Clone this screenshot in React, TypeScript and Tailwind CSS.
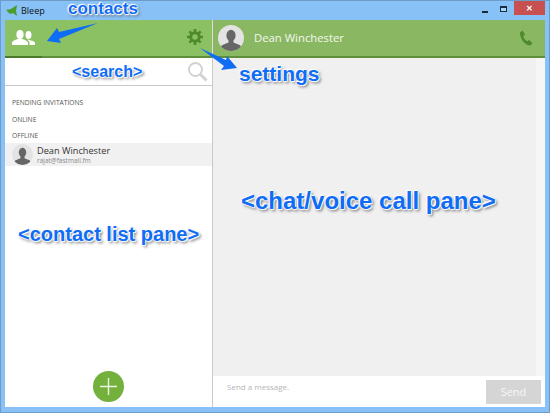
import React from "react";

const glow =
  "absolute whitespace-nowrap font-bold text-[#0f6cf5] font-['Liberation_Sans',sans-serif] leading-none [text-shadow:0_0_1px_#fff,0_0_2px_#fff,0_0_2px_#fff,1px_1px_1px_#fff,-1px_-1px_1px_#fff,2px_2px_3px_#666]";

function Avatar({ size }: { size: number }) {
  return (
    <svg width={size} height={size} viewBox="0 0 26 26" className="shrink-0">
      <defs>
        <clipPath id={`c${size}`}>
          <circle cx="13" cy="13" r="13" />
        </clipPath>
      </defs>
      <circle cx="13" cy="13" r="13" fill="#e3e3e3" />
      <g clipPath={`url(#c${size})`} fill="#666">
        <ellipse cx="13" cy="10.5" rx="4.6" ry="5.8" />
        <path d="M10.5 14.5h5v3l6 2.5c1.5.7 2 2 2 6H2.500c0-4 .5-5.300 2-6l6-2.500z" />
      </g>
    </svg>
  );
}

export default function App() {
  return (
    <div className="relative w-[550px] h-[413px] overflow-hidden bg-[#87c1f6] font-['Open_Sans','Noto_Sans',sans-serif] flex flex-col border border-[#6d9ccb]">
      {/* Title bar */}
      <div className="h-[19px] shrink-0 flex items-center pl-[5px] relative">
        <svg width="12" height="12" viewBox="0 0 12 12" className="mr-[3px]">
          <path d="M0 5l5-1 6-4-1 6 1 5-4-3-3 1z" fill="#4c9a2a" />
        </svg>
        <span className="text-[9px] text-[#111]">Bleep</span>
        <div className="ml-auto flex items-center h-full self-start">
          <div className="w-[6px] h-[2px] bg-[#1c2b3a] mt-[3px] mr-[12px] self-center" />
          <div className="w-[7px] h-[6px] border border-[#1c2b3a] border-t-2 bg-[#a9d6f8] mr-[7px] mb-[3px] self-center" />
          <div className="w-[31px] h-[14px] bg-[#c75050] text-white text-[8px] font-bold flex items-center justify-center self-start leading-none mr-[4px]">
            ✕
          </div>
        </div>
      </div>

      {/* Window content */}
      <div className="flex-1 mx-[4px] mb-[5px] flex bg-white min-h-0">
        {/* Left pane */}
        <div className="w-[208px] shrink-0 flex flex-col">
          <div className="h-[38px] shrink-0 bg-[#8cc163] border-b-2 border-b-[#5f8f3a] border-r border-r-[#ecd7e4] relative flex items-center justify-between pl-[7px] pr-[9px]">
            <svg width="23" height="15" viewBox="0 0 23 15" fill="#fff" className="mb-[1px]">
              <ellipse cx="8" cy="4.500" rx="3.600" ry="4.500" />
              <path d="M0 15v-2c0-2 3-3 5.500-4h5c2.500 1 5.500 2 5.500 4v2z" />
              <ellipse cx="16.500" cy="5" rx="3" ry="4" />
              <path d="M15 9.500c3 .8 8 1.500 8 3.500v2h-5.500v-2c0-1.500-1-2.500-2.500-3.500z" />
            </svg>
            <svg width="16" height="16" viewBox="0 0 16 16" fill="none" className="mb-[2px]">
              <circle cx="8" cy="8" r="4.300" stroke="#4f8a2c" strokeWidth="3" />
              <g stroke="#4f8a2c" strokeWidth="2.600">
                <path d="M8 0v3M8 13v3M0 8h3M13 8h3M2.300 2.300l2.100 2.100M11.600 11.600l2.100 2.100M2.300 13.700l2.100-2.100M11.600 4.400l2.100-2.100" />
              </g>
            </svg>
            <div className="absolute left-0 bottom-[-2px] w-[37px] h-[2px] bg-[#4a7a2a]" />
          </div>
          <div className="flex-1 flex flex-col border-r border-r-[#c8c8c8] min-h-0">
            <div className="h-[28px] shrink-0 border-b border-[#c8c8c8] flex items-center justify-end pr-[4px]">
              <svg width="21" height="21" viewBox="0 0 21 21" fill="none" stroke="#d2d2d2">
                <circle cx="8.500" cy="8.500" r="6.500" strokeWidth="2" />
                <path d="M13.500 13.500l6 6" strokeWidth="3" />
              </svg>
            </div>
            <div className="flex-1 flex flex-col pt-[12px] min-h-0 text-[#555]">
              <div className="text-[6.700px] leading-[10px] pl-[7px] uppercase">Pending invitations</div>
              <div className="text-[6.700px] leading-[10px] pl-[7px] uppercase mt-[6.500px]">Online</div>
              <div className="text-[6.700px] leading-[10px] pl-[7px] uppercase mt-[6.500px]">Offline</div>
              <div className="h-[23px] mt-[2px] bg-[#f1f1f1] flex items-center pl-[7px] gap-[4px]">
                <Avatar size={21} />
                <div className="flex flex-col">
                  <span className="text-[9.200px] leading-[12px] text-[#333]">Dean Winchester</span>
                  <span className="text-[6.500px] leading-[8px] text-[#888]">rajat@fastmail.fm</span>
                </div>
              </div>
              <div className="mt-auto mb-[5px] self-center w-[31px] h-[31px] rounded-full bg-[#73b13c] flex items-center justify-center">
                <svg width="17" height="17" viewBox="0 0 17 17" stroke="#eef6e6" strokeWidth="1.400">
                  <path d="M8.500 0v17M0 8.500h17" />
                </svg>
              </div>
            </div>
          </div>
        </div>

        {/* Right pane */}
        <div className="flex-1 flex flex-col min-w-0">
          <div className="h-[38px] shrink-0 bg-[#8ab862] border-b-2 border-[#5f8f3a] flex items-center pl-[5px] pr-[12px] gap-[10px]">
            <Avatar size={26} />
            <span className="text-[11.300px] text-[#f3f7ee]">Dean Winchester</span>
            <svg width="14" height="16" viewBox="0 0 14 16" className="ml-auto" fill="#4f8a2c">
              <path d="M1 2.500 3.500 .5 6 4.500 4.300 6.200c.6 2 2 3.800 3.800 5l1.900-1.300 3.500 3.200-2 2.400C6 15.500 .8 9 1 2.500z" />
            </svg>
          </div>
          <div className="flex-1 flex min-h-0 bg-[#f0f0f0]">
            <div className="flex-1" />
            <div className="w-[9px] bg-[#f6f6f6]" />
          </div>
          <div className="h-[31px] shrink-0 bg-white flex items-start pl-[14px] pr-[4px]">
            <span className="text-[8px] leading-[10px] mt-[6px] text-[#b5b5b5]">Send a message.</span>
            <div className="ml-auto w-[55px] h-[24px] mt-[4px] bg-[#d5d5d5] text-white/80 text-[11px] flex items-center justify-center">
              Send
            </div>
          </div>
        </div>
      </div>

      {/* Annotations */}
      <div className={`${glow} left-[67px] top-[-1px] text-[17px]`}>contacts</div>
      <div className={`${glow} left-[71px] top-[63px] text-[16px]`}>&lt;search&gt;</div>
      <div className={`${glow} left-[238px] top-[62px] text-[21px]`}>settings</div>
      <div className={`${glow} left-[17px] top-[223px] text-[20px]`}>&lt;contact list pane&gt;</div>
      <div className={`${glow} left-[240px] top-[188px] text-[24px]`}>&lt;chat/voice call pane&gt;</div>
      <svg className="absolute left-[-1px] top-[-1px]" width="550" height="413" viewBox="0 0 550 413" pointerEvents="none">
        <path d="M98 23 59 32 57 28 47 41 61 43 59 39Z" fill="#0f6cf5" />
        <path d="M200 48 226 60 227 56 237 68 221 70 224 66Z" fill="#0f6cf5" />
      </svg>
    </div>
  );
}
